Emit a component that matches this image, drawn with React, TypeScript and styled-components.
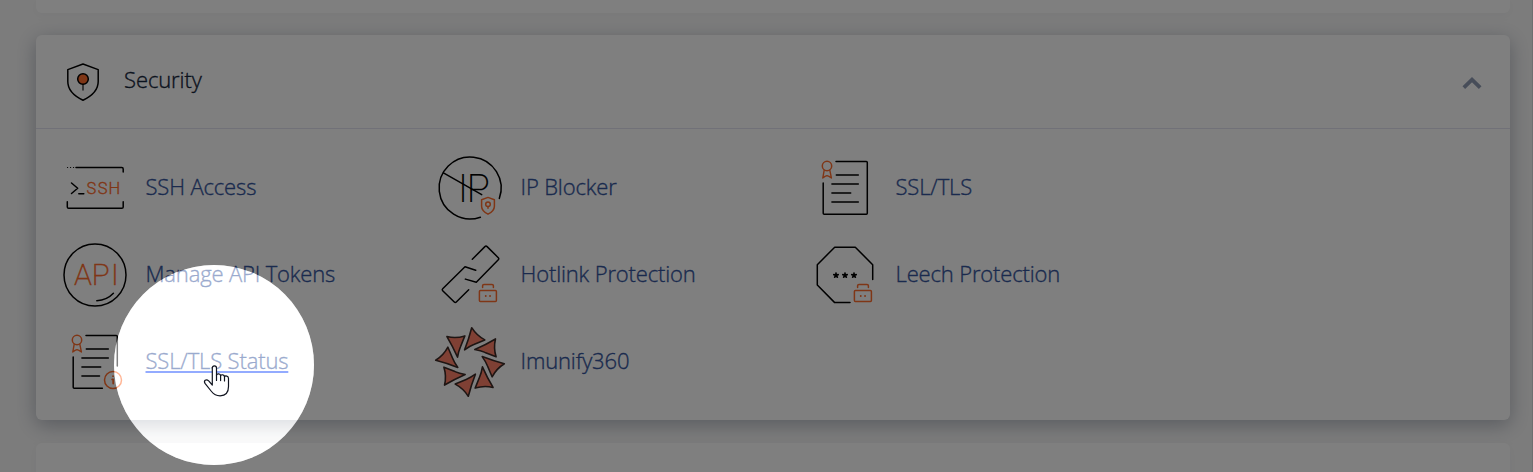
import React from "react";
import styled, { createGlobalStyle } from "styled-components";

const GlobalStyle = createGlobalStyle`
  *, *::before, *::after { box-sizing: border-box; }
  body {
    margin: 0;
    overflow: hidden;
    background: #f9f9f9;
    font-family: "Open Sans", sans-serif;
  }
`;

const Page = styled.main`
  position: relative;
  display: flex;
  flex-direction: column;
  gap: 22px;
  height: 472px;
  padding: 0 23px 0 36px;
  overflow: hidden;
  box-shadow: inset -1px 0 0 #dcdee0;
`;

const Card = styled.section<{ $raised?: boolean }>`
  flex: none;
  background: #fff;
  border-radius: 6px;
  box-shadow: ${(p) =>
    p.$raised ? "0 5px 20px rgba(41, 54, 80, 0.34)" : "0 2px 12px rgba(41, 58, 84, 0.04)"};
`;

const PreviousCard = styled(Card)`
  height: 13px;
  border-radius: 0 0 6px 6px;
`;

const NextCard = styled(Card)`
  position: relative;
  height: 60px;
  margin-top: 1px;
`;

const SecurityCard = styled(Card)`
  height: 385px;
`;

const Header = styled.header`
  display: flex;
  align-items: center;
  height: 94px;
  padding: 0 27px 0 31px;
  border-bottom: 1px solid #e2e3f0;
`;

const Title = styled.h2`
  flex: 1;
  margin: -5px 0 0 25px;
  font-size: 22px;
  font-weight: 300;
  letter-spacing: -0.1px;
  line-height: 30px;
  color: #16263c;
  -webkit-text-stroke: 0.35px currentColor;
`;

const Grid = styled.div`
  display: grid;
  grid-template-columns: repeat(3, 375px);
  grid-auto-rows: 64px;
  row-gap: 23px;
  padding: 27px 0 0 27px;
`;

const Item = styled.div`
  display: flex;
  align-items: center;
  gap: 18.5px;
`;

const Label = styled.a<{ $hovered?: boolean }>`
  margin-top: -5px;
  font-size: 22px;
  font-weight: 300;
  letter-spacing: -0.15px;
  line-height: 30px;
  color: #35559c;
  white-space: nowrap;
  -webkit-text-stroke: 0.35px currentColor;
  text-decoration: ${(p) => (p.$hovered ? "underline" : "none")};
  text-decoration-color: #2757ff;
  text-decoration-thickness: 2px;
  text-underline-offset: 2px;
  text-decoration-skip-ink: none;
`;

const Icon = styled.svg`
  flex: none;
  overflow: visible;
  fill: none;
  stroke: #000;
  stroke-width: 1.5;
  stroke-linecap: round;
  stroke-linejoin: round;
`;

const Accent = styled.g`
  stroke: #ff6c2c;
  stroke-width: 1.5;
`;

const Glyphs = styled.text<{ $size: number; $accent?: boolean; $weight: number; $outline: number }>`
  font-family: Roboto, sans-serif;
  font-size: ${(p) => p.$size}px;
  font-weight: ${(p) => p.$weight};
  fill: ${(p) => (p.$accent ? "#ff6c2c" : "#000")};
  stroke: ${(p) => (p.$accent ? "#ff6c2c" : "#000")};
  stroke-width: ${(p) => p.$outline};
`;

const Spotlight = styled.div`
  position: absolute;
  left: 114px;
  top: 265px;
  width: 200px;
  height: 200px;
  border-radius: 50%;
  background: rgba(255, 255, 255, 0.5);
  box-shadow: 0 0 0 1600px rgba(0, 0, 0, 0.5);
`;

const Pointer = styled.svg`
  position: absolute;
  left: 203px;
  top: 364px;
`;

const Box = ({ children }: { children: React.ReactNode }) => (
  <Icon width="64" height="64" viewBox="0 0 64 64">
    {children}
  </Icon>
);

const Ribbon = () => (
  <Accent>
    <circle cx="14" cy="10" r="4.7" />
    <path d="M11.2 14.2 9.8 22l2.2-1.6 2-.8 2 .8 2.4 1.6L16.8 14.2" strokeWidth="1.4" />
  </Accent>
);

const Lock = () => (
  <Accent>
    <rect x="41.4" y="47.6" width="17" height="11" rx="1" />
    <path d="M44.6 44.6v-1.8q0-1.4 1.4-1.4h8q1.4 0 1.4 1.4v1.8" />
    <path d="M47.7 53h.1M52 53h.1" strokeWidth="1.8" />
  </Accent>
);

const SshIcon = () => (
  <Box>
    <path d="M4.5 11.5h.1M7.5 11.5h.1M10.5 11.5h.1" strokeWidth="1.2" />
    <path d="M13 11.5h45.8q1.4 0 1.4 1.4V16M4.3 45.8v5.1q0 1.4 1.4 1.4h53.1q1.4 0 1.4-1.4v-5.1" />
    <path d="M8.5 27l6.2 5.2-6.2 5.3M15.8 37.8h5" />
    <Glyphs $size={16.5} $weight={300} $outline={0.35} $accent x="23.5 34.8 45.6" y="38">
      SSH
    </Glyphs>
  </Box>
);

const IpIcon = () => (
  <Box>
    <path d="M61.3 42.4A31 31 0 1 0 42.4 61.2M5 16.7l38.7 22" />
    <Glyphs $size={38} $weight={200} $outline={0.15} x="20 28.8" y="45.8">
      IP
    </Glyphs>
    <Accent>
      <path d="M50 41.4l6.4 2.4v6.4q0 4.6-6.4 8-6.4-3.4-6.4-8v-6.4z" />
      <circle cx="50" cy="48.2" r="2.3" />
      <path d="M50 50.5v1.8" />
    </Accent>
  </Box>
);

const CertificateIcon = ({ info }: { info?: boolean }) => (
  <Box>
    <path
      d={
        info
          ? "M23 5.5h30.3q1 0 1 1V36M39.4 58.3H11.2q-1 0-1-1V27"
          : "M23 5.5h30.3q1 0 1 1v50.8q0 1-1 1H11.2q-1 0-1-1V27"
      }
    />
    <path d={`M23.3 19h22M18.9 28h26.4M18.9 37h18.8M18.9 46h${info ? 17.6 : 26.4}`} />
    <Ribbon />
    {info && (
      <Accent>
        <circle cx="50" cy="50" r="8.5" />
        <path d="M50 46.2h.1M49.2 49.4H50.2v4.2" strokeWidth="1.8" />
      </Accent>
    )}
  </Box>
);

const ApiIcon = () => (
  <Box>
    <circle cx="32" cy="32" r="31" />
    <path d="M33.8 57.8q10.2-.8 16.6-7.6" />
    <Glyphs $size={29.5} $weight={200} $outline={0.4} $accent x="11 28.8 48" y="42.3">
      API
    </Glyphs>
  </Box>
);

const LinkIcon = () => (
  <Box>
    <path d="M34.3 16.3 46.9 3.6q1.1-1.1 2.2 0L60.3 14.7q1 1 0 2L38.3 39.3 27.4 36.1" />
    <path d="M37.7 27.3 27 23.7 4.7 45.7q-1 1 0 2L16.3 59q1 1 2 0l12.4-12.3" />
    <Lock />
  </Box>
);

const starPath = (cx: number, cy: number) =>
  [0, 1, 2, 3, 4]
    .map((i) => {
      const a = (-90 + i * 72) * (Math.PI / 180);
      return `M${cx} ${cy}L${(cx + 2.3 * Math.cos(a)).toFixed(2)} ${(cy + 2.3 * Math.sin(a)).toFixed(2)}`;
    })
    .join("");

const LeechIcon = () => (
  <Box>
    <path d="M59.7 36.5V21.7L42.3 4.2H21.7L4.3 21.7V42L21.7 59.6H37" />
    <path d={starPath(23, 32.3) + starPath(32, 32.3) + starPath(41, 32.3)} strokeWidth="1.7" />
    <Lock />
  </Box>
);

const ImunifyIcon = () => (
  <Box>
    {[0, 45, 90, 135, 180, 225, 270, 315].map((angle) => (
      <path
        key={angle}
        d="M33.7-2.3Q38.6 5.600 46.800 9.900Q40 12.800 35.800 14.600 31.500 16.300 26.600 19.800 30.800 9 33.700-2.300z"
        transform={`rotate(${angle} 32 32)`}
        fill="#ff8168"
        stroke="#3c2a26"
        strokeWidth="1.600"
      />
    ))}
  </Box>
);

const items = [
  { label: "SSH Access", icon: <SshIcon /> },
  { label: "IP Blocker", icon: <IpIcon /> },
  { label: "SSL/TLS", icon: <CertificateIcon /> },
  { label: "Manage API Tokens", icon: <ApiIcon /> },
  { label: "Hotlink Protection", icon: <LinkIcon /> },
  { label: "Leech Protection", icon: <LeechIcon /> },
  { label: "SSL/TLS Status", icon: <CertificateIcon info />, hovered: true },
  { label: "Imunify360", icon: <ImunifyIcon /> },
];

export default function App() {
  return (
    <>
      <GlobalStyle />
      <Page>
        <PreviousCard />
        <SecurityCard $raised>
          <Header>
            <Icon width="32" height="38" viewBox="0 0 32 38">
              <path d="M16 1 31.2 6.600V18.500Q31.200 30 16 37.200.8 30 .8 18.500V6.600z" />
              <path d="M16 21v6" stroke="#444" />
              <circle cx="16" cy="16" r="5.300" fill="#ff6c2c" />
            </Icon>
            <Title>Security</Title>
            <Icon width="22" height="14" viewBox="0 0 22 14">
              <path d="M2.800 12.600l8.200-8 8.200 8" stroke="#8f9bb3" strokeWidth="3.800" strokeLinecap="butt" strokeLinejoin="miter" />
            </Icon>
          </Header>
          <Grid>
            {items.map((item) => (
              <Item key={item.label}>
                {item.icon}
                <Label $hovered={item.hovered}>{item.label}</Label>
              </Item>
            ))}
          </Grid>
        </SecurityCard>
        <NextCard />
        <Spotlight />
        <Pointer width="28" height="34" viewBox="0 0 28 34">
          <path
            d="M9.300 21V4q0-2.200 2.100-2.200T13.500 4v7.200q.4-1.500 2.200-1.300 1.700.2 1.900 1.700.6-1.100 2.200-.8 1.600.3 1.700 1.800.7-.9 2.300-.5 1.700.5 1.700 2.300v8.200q0 9.200-8.400 9.200-5.300 0-8.600-4.300L2 19.400q-1.200-2 .2-3.100 1.600-1.100 3.500.6z"
            fill="#fff"
            stroke="#10141f"
            strokeWidth="1.200"
            strokeLinejoin="round"
          />
          <path d="M13.500 11v5.500M17.600 11.600v5M21.500 12.600v4.300" stroke="#10141f" strokeWidth="1.200" strokeLinecap="round" />
        </Pointer>
      </Page>
    </>
  );
}
